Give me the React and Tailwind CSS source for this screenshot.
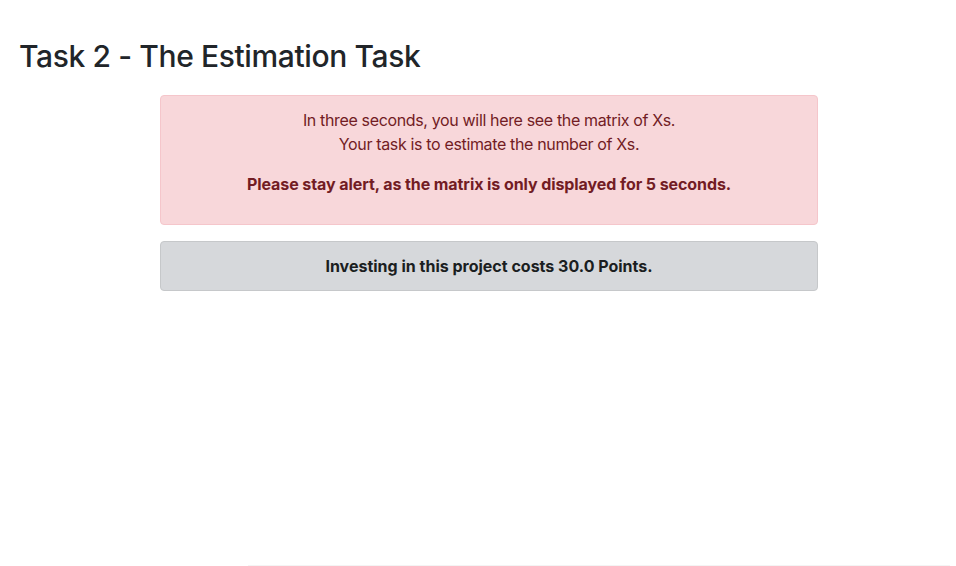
export default function App() {
  return (
    <div className="h-[566px] flex flex-col bg-white overflow-hidden" style={{ fontFamily: "Inter, 'Noto Sans', sans-serif" }}>
      <div className="pl-[19px] pt-[38px]">
        <h2 className="text-[30px] leading-[36px] font-medium text-[#212529] tracking-[-0.38px]">Task 2 - The Estimation Task</h2>
      </div>
      <div className="ml-[160px] w-[658px] mt-[21px] flex flex-col gap-[16px]">
        <div className="rounded-[4px] border border-[#f5c6cb] bg-[#f8d7da] text-[#721c24] text-center px-5 pt-3 pb-[28px] text-[16px] leading-[24px]">
          <p className="tracking-[-0.35px]">In three seconds, you will here see the matrix of Xs.</p>
          <p className="mb-4 tracking-[-0.35px]">Your task is to estimate the number of Xs.</p>
          <p className="font-bold tracking-[-0.08px]">Please stay alert, as the matrix is only displayed for 5 seconds.</p>
        </div>
        <div className="rounded-[4px] border border-[#c6c8ca] bg-[#d6d8db] text-[#1b1e21] text-center px-5 py-3 text-[16px] leading-[24px] font-bold">
          Investing in this project costs 30.0 Points.
        </div>
      </div>
      <div className="mt-auto ml-[248px] mr-[6px] h-px bg-[#f4f4f4]" />
    </div>
  );
}
